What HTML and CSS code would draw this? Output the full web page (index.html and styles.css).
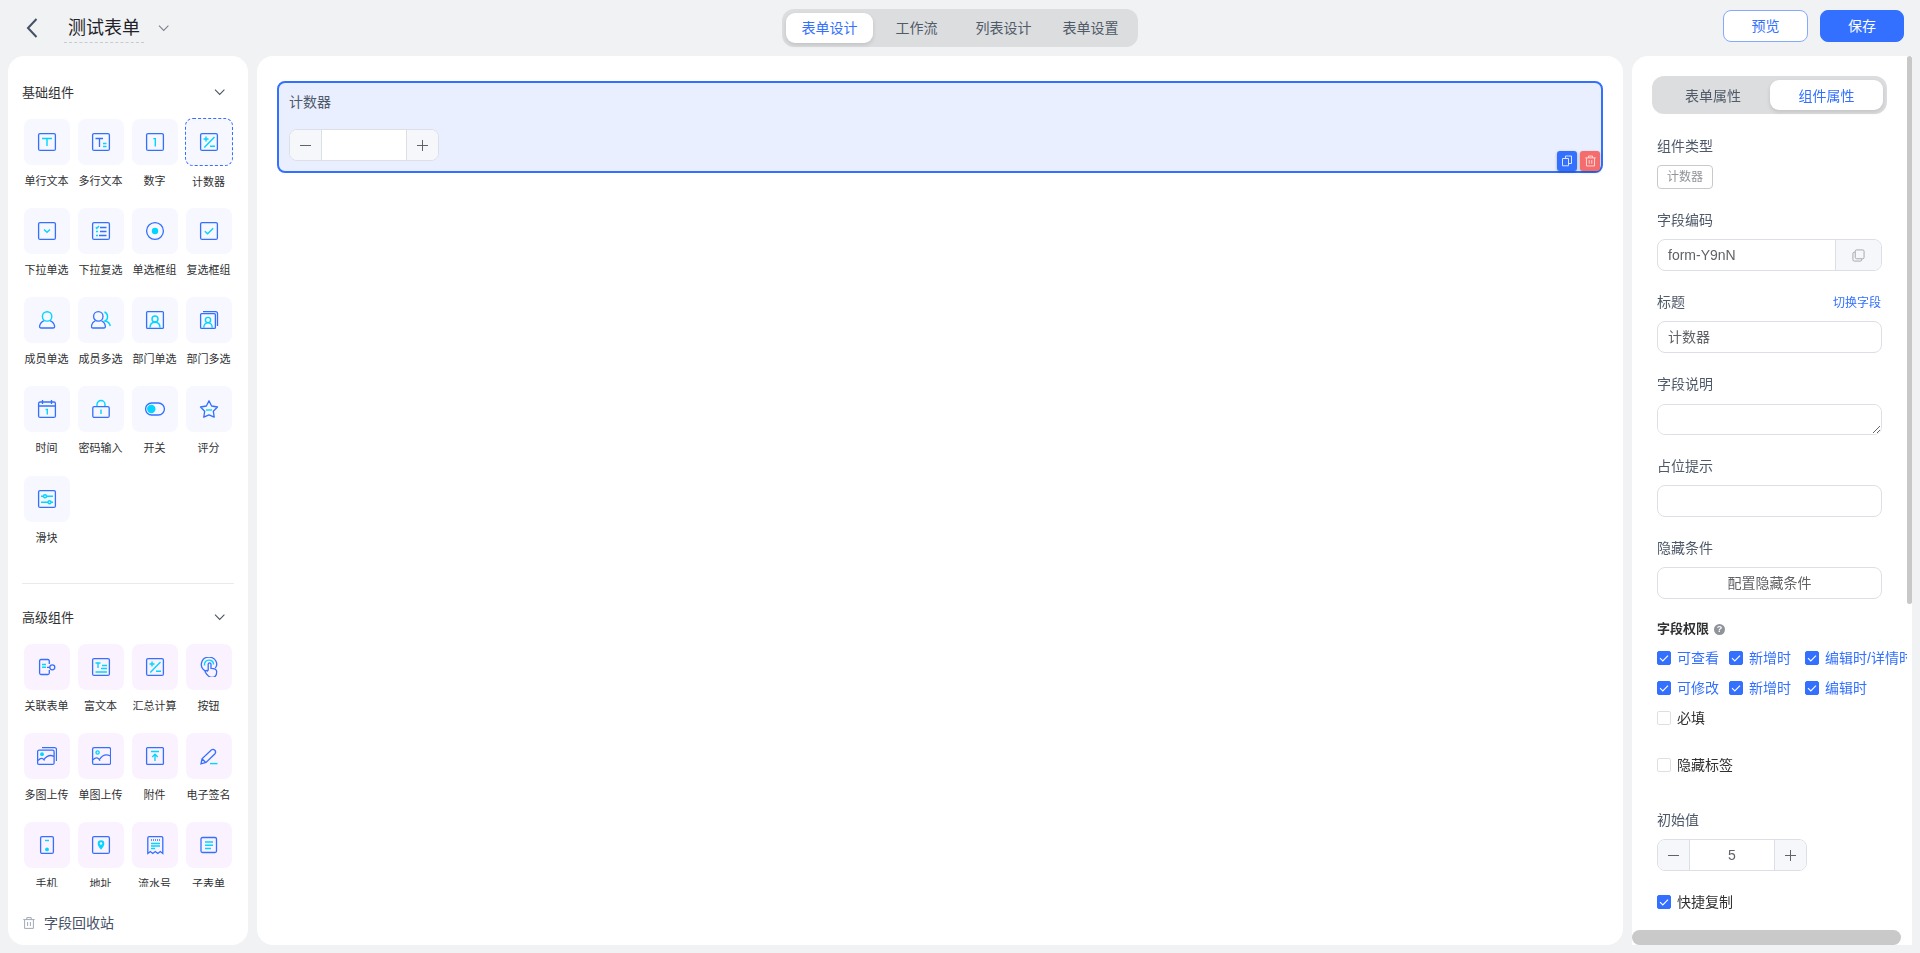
FILE: index.html
```html
<!doctype html>
<html lang="zh-CN">
<head>
    <meta charset="utf-8">
    <meta name="viewport" content="width=device-width, initial-scale=1.0">
    <title>测试表单</title>
    <link rel="stylesheet" href="styles.css">
</head>
<body>
    <svg class="defs">
        <symbol id="down" viewBox="0 0 12 12"><path d="M1 3.700 5.700 8.400l4.700-4.700" fill="none" stroke="currentColor" stroke-width="1.100"/></symbol>
        <symbol id="check" viewBox="0 0 14 14"><path d="M3 7.200l2.800 2.700L11 4.600" fill="none" stroke="#fff" stroke-width="1.100"/></symbol>
        <symbol id="trash" viewBox="0 0 12 12"><path d="M.3 2.600h11.400M3.800 2.400V.6h4.400v1.800M1.600 2.800v8.600h8.800V2.800M4.600 5v4M7.400 5v4" fill="none" stroke="currentColor"/></symbol>
        <symbol id="text" viewBox="0 0 20 20"><rect class="b" x="1.600" y="1.600" width="16.800" height="16.800" rx="1.500"/><path class="c" d="M5 6.500h10M10 6.500V14"/></symbol>
        <symbol id="textarea" viewBox="0 0 20 20"><rect class="b" x="1.600" y="1.600" width="16.800" height="16.800" rx="1.500"/><path class="b" d="M4.500 6.500h7.500M8.500 6.500V15"/><path class="c" d="M12 11.500h3.500M12 14.500h3.500"/></symbol>
        <symbol id="number" viewBox="0 0 20 20"><rect class="b" x="1.600" y="1.600" width="16.800" height="16.800" rx="1.500"/><path class="c" d="M8.300 6.600h2V14.500"/></symbol>
        <symbol id="counter" viewBox="0 0 20 20"><rect class="b" x="1.600" y="1.600" width="16.800" height="16.800" rx="1.500"/><path class="c" d="M4.500 7h5M7 4.500v5M15.500 5 5.300 15.400M11 14.300h5"/></symbol>
        <symbol id="select" viewBox="0 0 20 20"><rect class="b" x="1.600" y="1.600" width="16.800" height="16.800" rx="1.500"/><path class="c" d="M7 8.500l3 2.800 3-2.800"/></symbol>
        <symbol id="multi" viewBox="0 0 20 20"><rect class="b" x="1.600" y="1.600" width="16.800" height="16.800" rx="1.500"/><path class="b" d="M9 6.500h6.500M9 10.500h6.500M8 14.500h7.500"/><path class="c" d="M4.800 6.300l1 1.200L8 5M5 10.500h2M5 14.500h2"/></symbol>
        <symbol id="radio" viewBox="0 0 20 20"><circle class="b" cx="10" cy="10" r="8.400"/><circle class="f" cx="10" cy="10" r="3.200"/></symbol>
        <symbol id="checkbox" viewBox="0 0 20 20"><rect class="b" x="1.600" y="1.600" width="16.800" height="16.800" rx="1.500"/><path class="c" d="M5.800 10.200l2.800 2.600 5.600-5.500"/></symbol>
        <symbol id="user" viewBox="0 0 20 20"><path class="b" d="M7.300 10.700C4.300 11.800 3 14 2.600 16.200c-.2 1 .5 1.800 1.500 1.800h12c1 0 1.700-.8 1.500-1.800-.4-2.200-1.700-4.400-4.700-5.500"/><circle class="c" cx="10.100" cy="6.400" r="4.700"/></symbol>
        <symbol id="users" viewBox="0 0 20 20"><path class="b" d="M4.300 10.800C1.700 11.800.7 14.200.4 16.300c-.1 1 .5 1.700 1.500 1.700h11c1 0 1.600-.7 1.500-1.700-.3-2.100-1.300-4.500-3.900-5.500"/><circle class="b" cx="7.300" cy="6.400" r="4.700"/><path class="c" d="M13.500 2c4 1.600 4 7.300.5 9 3 .5 4.700 2 5.300 5"/></symbol>
        <symbol id="dept" viewBox="0 0 20 20"><rect class="b" x="1.600" y="1.600" width="16.800" height="16.800" rx="1"/><circle class="c" cx="10" cy="9" r="3"/><path class="c" d="M5 17.800c0-3.600 1.800-5.500 5-5.500s5 1.900 5 5.500"/></symbol>
        <symbol id="depts" viewBox="0 0 20 20"><rect class="b" x="1.600" y="3.600" width="14.800" height="14.800" rx="1"/><path class="b" d="M4 1.600h12.500q2 0 2 2V16"/><circle class="c" cx="9" cy="10" r="2.600"/><path class="c" d="M4.800 17.800c0-3 1.500-4.900 4.200-4.900s4.200 1.900 4.200 4.900"/></symbol>
        <symbol id="date" viewBox="0 0 20 20"><rect class="b" x="1.600" y="3" width="16.800" height="15.400" rx="1.500"/><path class="b" d="M1.600 7h16.800M5.500 1v4M14.500 1v4"/><path class="c" d="M8.600 10.500h1.700v5"/></symbol>
        <symbol id="lock" viewBox="0 0 20 20"><rect class="b" x="1.800" y="7.600" width="16.400" height="10.800" rx="1.500"/><path class="c" d="M6 7V5.500a4 4 0 0 1 8 0V7M10 10.500V15"/></symbol>
        <symbol id="switch" viewBox="0 0 20 20"><rect class="b" x=".6" y="4" width="18.800" height="12" rx="6"/><circle class="f" cx="6.300" cy="10" r="4.200"/></symbol>
        <symbol id="star" viewBox="0 0 20 20"><path class="b" stroke-linejoin="round" d="M10 1.800l2.600 5.200 5.900 1-4.200 4.200.9 6-5.200-2.400-5.200 2.400.9-6L1.500 8l5.900-1z"/><path class="c" d="M7 11h6"/></symbol>
        <symbol id="slider" viewBox="0 0 20 20"><rect class="b" x="1.600" y="1.600" width="16.800" height="16.800" rx="1.500"/><path class="c" d="M4 7.300h2.500M9.500 7.300H16M4 13.200h7M14 13.200h2"/><circle class="c" cx="8" cy="7.300" r="1.500"/><circle class="c" cx="12.500" cy="13.200" r="1.500"/></symbol>
        <symbol id="relation" viewBox="0 0 20 20"><path class="b" d="M12.300 7V4q0-1.500-1.500-1.500H4Q2.600 2.500 2.600 4v12q0 1.500 1.400 1.500h6.800q1.500 0 1.500-1.500v-3M10 10.300h3"/><circle class="b" cx="15.300" cy="10.300" r="2.500"/><path class="c" d="M5 7.500h4M5 10.300h4"/></symbol>
        <symbol id="rich" viewBox="0 0 20 20"><rect class="b" x="1.600" y="1.600" width="16.800" height="16.800" rx="1.500"/><path class="c" d="M4.500 6h5M7 6v5M11 8.500h5M10 11.500h6M4.500 15H16"/></symbol>
        <symbol id="button" viewBox="0 0 20 20"><path class="b" d="M7 14.300C-.7 10.500 1.800.2 10 .2c7 0 9.500 7 6.300 11"/><path class="c" d="M5.500 8.500C4.500 1.500 15 1.500 14.500 7.500"/><path class="b" d="M9.200 13V7.300c0-2 2.800-2 2.800 0v4c3 0 5.700.2 5.700 3.500 0 4-1.700 5.700-4.800 5.700-3.200 0-4.500-2-6.500-5.200-.8-1.500 1-2.300 2-1.300z"/></symbol>
        <symbol id="images" viewBox="0 0 20 20"><rect class="b" x=".6" y="4.200" width="16.500" height="14.200" rx="1.500"/><path class="b" d="M5 1.600h12.500q2 0 2 2V15M1 14.500c3-3 5-2.500 6.500 0M6.500 14c3-4 6-6 10.500-3.500"/><circle class="f" cx="5" cy="8.200" r="1.900"/></symbol>
        <symbol id="image" viewBox="0 0 20 20"><rect class="b" x="1.600" y="1.600" width="18" height="16.800" rx="1.500"/><path class="b" d="M2 13.700c3-3 5.500-2 7 1M8.500 13.500C11 9.500 15 7.800 19.500 10"/><circle class="c" cx="6.600" cy="6.500" r="1.600"/></symbol>
        <symbol id="attach" viewBox="0 0 20 20"><rect class="b" x="1.600" y="1.600" width="16.800" height="16.800" rx="1"/><path class="c" d="M6 5.500h8M10 15V8.500M7.200 11 10 8.200l2.800 2.800"/></symbol>
        <symbol id="sign" viewBox="0 0 20 20"><path class="b" d="M2 17.800l1-5L12.300 4q2-1.300 3.500.3t.2 3.400L7 16.500zM3 12.700l4 4"/><path class="c" d="M11 17.600h7.500"/></symbol>
        <symbol id="phone" viewBox="0 0 20 20"><rect class="b" x="3.600" y="1.600" width="12.800" height="16.800" rx="1.500"/><path class="c" d="M8 5.500h4"/><circle class="f" cx="10" cy="14.400" r="1.900"/></symbol>
        <symbol id="address" viewBox="0 0 20 20"><rect class="b" x="1.600" y="1.600" width="16.800" height="16.800" rx="1.500"/><path class="f" fill-rule="evenodd" d="M10 14.800C8 12.300 6.700 10.500 6.700 8.500a3.300 3.300 0 0 1 6.600 0c0 2-1.300 3.800-3.300 6.300zM10 9.800a1.300 1.300 0 1 0 0-2.600 1.300 1.300 0 0 0 0 2.600z"/></symbol>
        <symbol id="serial" viewBox="0 0 20 20"><path class="b" d="M2.800 18.500V3q0-1.400 1.400-1.400h12.200q1.400 0 1.400 1.400v15.500l-2.500-2-2.500 2-2.500-2-2.500 2-2.500-2z"/><path class="b" stroke-dasharray="1 1" d="M6 5h9"/><path class="c" d="M6 8.500h9M6 11h9M6 13.500h4"/></symbol>
        <symbol id="subform" viewBox="0 0 20 20"><rect class="b" x="2" y="2.500" width="15.500" height="15" rx="1.500"/><path class="c" d="M6 7h8M6 10.200h8M6 13.500h6"/></symbol>
    </svg>

    <header class="header">
        <div class="name">
            <svg class="back" viewBox="0 0 12 20"><path d="M10.500 1 2 10l8.500 9" fill="none" stroke="currentColor" stroke-width="2"/></svg>
            <span class="name-text">测试表单</span>
            <svg class="arrow"><use href="#down"/></svg>
        </div>
        <nav class="tabs">
            <a class="tab active">表单设计</a>
            <a class="tab">工作流</a>
            <a class="tab">列表设计</a>
            <a class="tab">表单设置</a>
        </nav>
        <div class="actions">
            <button class="btn">预览</button>
            <button class="btn primary">保存</button>
        </div>
    </header>

    <main class="main">
        <aside class="left">
            <div class="list">
                <div class="group-title"><span>基础组件</span><svg class="arrow"><use href="#down"/></svg></div>
                <div class="grid basic">
                    <div class="item"><div class="tile"><svg><use href="#text"/></svg></div><p>单行文本</p></div>
                    <div class="item"><div class="tile"><svg><use href="#textarea"/></svg></div><p>多行文本</p></div>
                    <div class="item"><div class="tile"><svg><use href="#number"/></svg></div><p>数字</p></div>
                    <div class="item selected"><div class="tile"><svg><use href="#counter"/></svg></div><p>计数器</p></div>
                    <div class="item"><div class="tile"><svg><use href="#select"/></svg></div><p>下拉单选</p></div>
                    <div class="item"><div class="tile"><svg><use href="#multi"/></svg></div><p>下拉复选</p></div>
                    <div class="item"><div class="tile"><svg><use href="#radio"/></svg></div><p>单选框组</p></div>
                    <div class="item"><div class="tile"><svg><use href="#checkbox"/></svg></div><p>复选框组</p></div>
                    <div class="item"><div class="tile"><svg><use href="#user"/></svg></div><p>成员单选</p></div>
                    <div class="item"><div class="tile"><svg><use href="#users"/></svg></div><p>成员多选</p></div>
                    <div class="item"><div class="tile"><svg><use href="#dept"/></svg></div><p>部门单选</p></div>
                    <div class="item"><div class="tile"><svg><use href="#depts"/></svg></div><p>部门多选</p></div>
                    <div class="item"><div class="tile"><svg><use href="#date"/></svg></div><p>时间</p></div>
                    <div class="item"><div class="tile"><svg><use href="#lock"/></svg></div><p>密码输入</p></div>
                    <div class="item"><div class="tile"><svg><use href="#switch"/></svg></div><p>开关</p></div>
                    <div class="item"><div class="tile"><svg><use href="#star"/></svg></div><p>评分</p></div>
                    <div class="item"><div class="tile"><svg><use href="#slider"/></svg></div><p>滑块</p></div>
                </div>
                <div class="line"></div>
                <div class="group-title"><span>高级组件</span><svg class="arrow"><use href="#down"/></svg></div>
                <div class="grid senior">
                    <div class="item"><div class="tile"><svg><use href="#relation"/></svg></div><p>关联表单</p></div>
                    <div class="item"><div class="tile"><svg><use href="#rich"/></svg></div><p>富文本</p></div>
                    <div class="item"><div class="tile"><svg><use href="#counter"/></svg></div><p>汇总计算</p></div>
                    <div class="item"><div class="tile"><svg><use href="#button"/></svg></div><p>按钮</p></div>
                    <div class="item"><div class="tile"><svg><use href="#images"/></svg></div><p>多图上传</p></div>
                    <div class="item"><div class="tile"><svg><use href="#image"/></svg></div><p>单图上传</p></div>
                    <div class="item"><div class="tile"><svg><use href="#attach"/></svg></div><p>附件</p></div>
                    <div class="item"><div class="tile"><svg><use href="#sign"/></svg></div><p>电子签名</p></div>
                    <div class="item"><div class="tile"><svg><use href="#phone"/></svg></div><p>手机</p></div>
                    <div class="item"><div class="tile"><svg><use href="#address"/></svg></div><p>地址</p></div>
                    <div class="item"><div class="tile"><svg><use href="#serial"/></svg></div><p>流水号</p></div>
                    <div class="item"><div class="tile"><svg><use href="#subform"/></svg></div><p>子表单</p></div>
                </div>
            </div>
            <div class="recycle"><svg><use href="#trash"/></svg><span>字段回收站</span></div>
        </aside>

        <section class="canvas">
            <div class="field">
                <div class="field-label">计数器</div>
                <div class="stepper">
                    <span class="step minus"></span>
                    <span class="value"></span>
                    <span class="step plus"></span>
                </div>
                <div class="tools">
                    <span class="tool copy"><svg viewBox="0 0 12 12"><path d="M1.500 3.500h6v7.300h-6zM4.500 3.300V1h3M7.500 8.500h3V1h-3" fill="none" stroke="currentColor"/></svg></span>
                    <span class="tool del"><svg><use href="#trash"/></svg></span>
                </div>
            </div>
        </section>

        <aside class="right">
            <div class="props">
                <div class="tabs seg">
                    <a class="tab">表单属性</a>
                    <a class="tab active">组件属性</a>
                </div>
                <div class="form">
                    <div class="label">组件类型</div>
                    <span class="tag">计数器</span>
                    <div class="label">字段编码</div>
                    <div class="input group">
                        <span class="input-text">form-Y9nN</span>
                        <span class="append"><svg viewBox="0 0 14 14"><rect x="3.500" y="1" width="9.500" height="9.500" rx="1.500"/><path d="M3.300 3.500H2.500Q1 3.500 1 5v6.500Q1 13 2.500 13H9q1.500 0 1.500-1.500v-.8"/></svg></span>
                    </div>
                    <div class="label">标题<a class="link">切换字段</a></div>
                    <div class="input">计数器</div>
                    <div class="label">字段说明</div>
                    <textarea class="input area"></textarea>
                    <div class="label">占位提示</div>
                    <div class="input"></div>
                    <div class="label">隐藏条件</div>
                    <div class="input center">配置隐藏条件</div>
                    <div class="auth">字段权限<span class="help">?</span></div>
                    <div class="checks">
                        <label class="check on"><i><svg><use href="#check"/></svg></i><span>可查看</span></label>
                        <label class="check on"><i><svg><use href="#check"/></svg></i><span>新增时</span></label>
                        <label class="check on"><i><svg><use href="#check"/></svg></i><span>编辑时/详情时</span></label>
                    </div>
                    <div class="checks">
                        <label class="check on"><i><svg><use href="#check"/></svg></i><span>可修改</span></label>
                        <label class="check on"><i><svg><use href="#check"/></svg></i><span>新增时</span></label>
                        <label class="check on"><i><svg><use href="#check"/></svg></i><span>编辑时</span></label>
                    </div>
                    <div class="checks"><label class="check"><i></i><span>必填</span></label></div>
                    <div class="checks hide-label"><label class="check"><i></i><span>隐藏标签</span></label></div>
                    <div class="label init">初始值</div>
                    <div class="stepper">
                        <span class="step minus"></span>
                        <span class="value">5</span>
                        <span class="step plus"></span>
                    </div>
                    <div class="checks fast"><label class="check on dark"><i><svg><use href="#check"/></svg></i><span>快捷复制</span></label></div>
                </div>
            </div>
            <div class="bar-y"></div>
            <div class="bar-x"></div>
        </aside>
    </main>
</body>
</html>
```
FILE: styles.css
```css
* {
    box-sizing: border-box;
}
html, body {
    margin: 0;
    padding: 0;
}
body {
    height: 100vh;
    display: flex;
    flex-direction: column;
    overflow: hidden;
    background-color: #f0f2f4;
    font-family: "Liberation Sans", "Noto Sans CJK SC", sans-serif;
    font-size: 14px;
    color: #303133;
}
p {
    margin: 0;
}
.defs {
    display: none;
}
.b {
    fill: none;
    stroke: #3370ff;
    stroke-width: 1.3;
}
.c {
    fill: none;
    stroke: #00d6ff;
    stroke-width: 1.4;
}
.f {
    fill: #00d6ff;
}

/* header */
.header {
    height: 56px;
    flex-shrink: 0;
    display: grid;
    grid-template-columns: 1fr 356px 1fr;
    align-items: start;
}
.name {
    display: flex;
    align-items: center;
    padding: 12px 0 0 26px;
}
.back {
    width: 12px;
    height: 20px;
    color: #465066;
}
.name-text {
    width: 80px;
    height: 31px;
    margin-left: 26px;
    padding-left: 4px;
    border-bottom: 1px dashed #c8cacf;
    font-size: 18px;
    line-height: 32px;
    color: #1f2329;
}
.arrow {
    width: 12px;
    height: 12px;
    color: #4e5560;
}
.name .arrow {
    margin-left: 14px;
    color: #7d828c;
}
.tabs {
    height: 38px;
    display: flex;
    margin-top: 9px;
    padding: 4px;
    border-radius: 12px;
    background-color: #dcdddf;
}
.tab {
    flex: 1;
    height: 30px;
    border-radius: 9px;
    text-align: center;
    line-height: 31px;
    color: #505a68;
}
.tab.active {
    background-color: white;
    color: #3370ff;
    box-shadow: 0 2px 4px rgba(0, 0, 0, .12);
}
.actions {
    display: flex;
    justify-content: flex-end;
    gap: 12px;
    padding: 10px 16px 0 0;
}
.btn {
    width: 84px;
    height: 32px;
    padding: 0;
    border: 1px solid #85a9ff;
    border-radius: 8px;
    background-color: white;
    font-family: inherit;
    font-size: 14px;
    line-height: 29px;
    color: #3370ff;
}
.btn:first-child {
    width: 85px;
}
.primary {
    border-color: #3370ff;
    background-color: #3370ff;
    color: white;
}

.main {
    height: 889px;
    display: flex;
}

/* component list */
.left {
    width: 240px;
    margin-left: 8px;
    border-radius: 16px;
    background-color: white;
}
.list {
    height: 831px;
    overflow: hidden;
    padding: 26px 12px 0;
}
.group-title {
    height: 20px;
    display: flex;
    align-items: center;
    justify-content: space-between;
    padding: 0 10px 0 2px;
    font-size: 13px;
}
.group-title span {
    padding-bottom: 2px;
}
.grid {
    display: grid;
    grid-template-columns: repeat(4, 54px);
    grid-auto-rows: 89px;
    margin-top: 17px;
}
.basic {
    grid-template-rows: 89px 89px 89px 90px 89px;
}
.item {
    display: flex;
    flex-direction: column;
    align-items: center;
    gap: 6px;
}
.tile {
    width: 46px;
    height: 46px;
    display: flex;
    align-items: center;
    justify-content: center;
    border-radius: 8px;
    background-color: #f6f7ff;
}
.tile svg {
    width: 20px;
    height: 20px;
    overflow: visible;
}
.senior .tile {
    background-color: #fbf2ff;
}
.selected .tile {
    width: 48px;
    height: 48px;
    margin-top: -1px;
    border: 1px dashed #3370ff;
}
.item p {
    padding-right: 1px;
    font-size: 11px;
    line-height: 20px;
    white-space: nowrap;
}
.line {
    height: 1px;
    margin: 18px 2px 23px;
    background-color: #e9eaec;
}
.recycle {
    display: flex;
    align-items: center;
    gap: 9px;
    height: 24px;
    margin-top: 24px;
    padding-left: 15px;
    color: #465066;
}
.recycle span {
    padding-bottom: 2px;
}
.recycle svg {
    width: 12px;
    height: 12px;
    color: #a3a9b5;
}

/* canvas */
.canvas {
    flex: 1;
    margin: 0 9px;
    padding: 25px 20px;
    border-radius: 16px;
    background-color: white;
}
.field {
    position: relative;
    height: 92px;
    padding: 9px 10px;
    border: 2px solid #3370ff;
    border-radius: 8px;
    background-color: #e9efff;
}
.field-label {
    height: 20px;
    line-height: 20px;
    margin-bottom: 17px;
    color: #4e5969;
}
.stepper {
    width: 150px;
    height: 32px;
    display: flex;
    border: 1px solid #dcdfe6;
    border-radius: 8px;
    overflow: hidden;
    background-color: white;
}
.step {
    width: 31px;
    display: flex;
    align-items: center;
    justify-content: center;
    background: #f5f7fa;
}
.step::before {
    content: "";
    width: 11px;
    height: 1px;
    background-color: #606266;
}
.plus::after {
    content: "";
    width: 1px;
    height: 11px;
    margin-left: -6px;
    margin-right: 5px;
    background-color: #606266;
}
.value {
    flex: 1;
    border: 0 solid #dcdfe6;
    border-width: 0 1px;
    text-align: center;
    line-height: 31px;
    color: #606266;
}
.tools {
    position: absolute;
    right: 1px;
    bottom: 0;
    display: flex;
    gap: 3px;
}
.tool {
    width: 20px;
    height: 20px;
    display: flex;
    align-items: center;
    justify-content: center;
    border-radius: 3px;
    background-color: #3370ff;
    color: #dbe5ff;
    box-shadow: 0 1px 3px rgba(0, 0, 0, .3);
}
.tool svg {
    width: 12px;
    height: 12px;
}
.del {
    background-color: #f56c6c;
    color: #fde0e0;
}
.del svg {
    width: 11px;
    height: 12px;
}

/* properties */
.right {
    position: relative;
    width: 280px;
    margin-right: 8px;
    border-radius: 16px 0 0 0;
    background-color: white;
}
.props {
    width: 275px;
    height: 100%;
    overflow: hidden;
    padding: 20px 20px 0;
}
.seg {
    margin-top: 0;
}
.seg .tab {
    line-height: 32px;
}
.seg .tab.active {
    flex: none;
    width: 113px;
}
.form {
    width: 225px;
    margin: 20px 0 0 5px;
}
.label {
    height: 24px;
    display: flex;
    align-items: center;
    justify-content: space-between;
    margin: 19px 0 7px;
    padding-bottom: 2px;
    color: #4e5969;
}
.link {
    padding-right: 1px;
    font-size: 12px;
    color: #3370ff;
}
.tag {
    width: 56px;
    height: 24px;
    display: block;
    border: 1px solid #c8c9cc;
    border-radius: 4px;
    text-align: center;
    font-size: 12px;
    line-height: 23px;
    color: #909399;
}
.input {
    width: 225px;
    height: 32px;
    display: block;
    padding: 0 10px;
    border: 1px solid #dcdfe6;
    border-radius: 8px;
    background-color: white;
    line-height: 30px;
    color: #606266;
}
.group {
    display: flex;
    padding-right: 0;
    overflow: hidden;
}
.input-text {
    flex: 1;
}
.append {
    width: 46px;
    display: flex;
    align-items: center;
    justify-content: center;
    border-left: 1px solid #dcdfe6;
    background-color: #f5f7fa;
}
.append svg {
    width: 13px;
    height: 13px;
    fill: none;
    stroke: #a0a3aa;
}
.area {
    height: 31px;
    margin-top: 8px;
    resize: vertical;
}
.center {
    text-align: center;
}
.auth {
    height: 24px;
    display: flex;
    align-items: center;
    gap: 5px;
    margin: 17px 0 3px;
    padding-bottom: 2px;
    font-size: 13px;
    font-weight: bold;
}
.help {
    width: 11px;
    height: 11px;
    margin-top: 4px;
    border-radius: 50%;
    background-color: #909399;
    text-align: center;
    font-size: 9px;
    line-height: 11px;
    color: white;
}
.checks {
    height: 30px;
    display: grid;
    grid-template-columns: 72px 76px 1fr;
    align-items: center;
}
.check {
    display: flex;
    align-items: center;
    gap: 6px;
    white-space: nowrap;
}
.check span {
    margin: -1px 0 1px;
}
.check i {
    width: 14px;
    height: 14px;
    flex-shrink: 0;
    border: 1px solid #dcdfe6;
    border-radius: 2px;
}
.check svg {
    width: 14px;
    height: 14px;
    display: block;
    margin: -1px;
}
.on {
    color: #3370ff;
}
.on i {
    border-color: #3370ff;
    background-color: #3370ff;
}
.dark {
    color: #303133;
}
.hide-label {
    margin-top: 17px;
}
.init {
    margin-top: 28px;
}
.fast {
    margin-top: 16px;
}
.bar-y {
    position: absolute;
    top: 0;
    right: 0;
    width: 5px;
    height: 548px;
    border-radius: 3px;
    background-color: #c8c8c8;
}
.bar-x {
    position: absolute;
    left: 0;
    bottom: 0;
    width: 269px;
    height: 15px;
    border-radius: 8px;
    background-color: #c9c9c9;
}
```
